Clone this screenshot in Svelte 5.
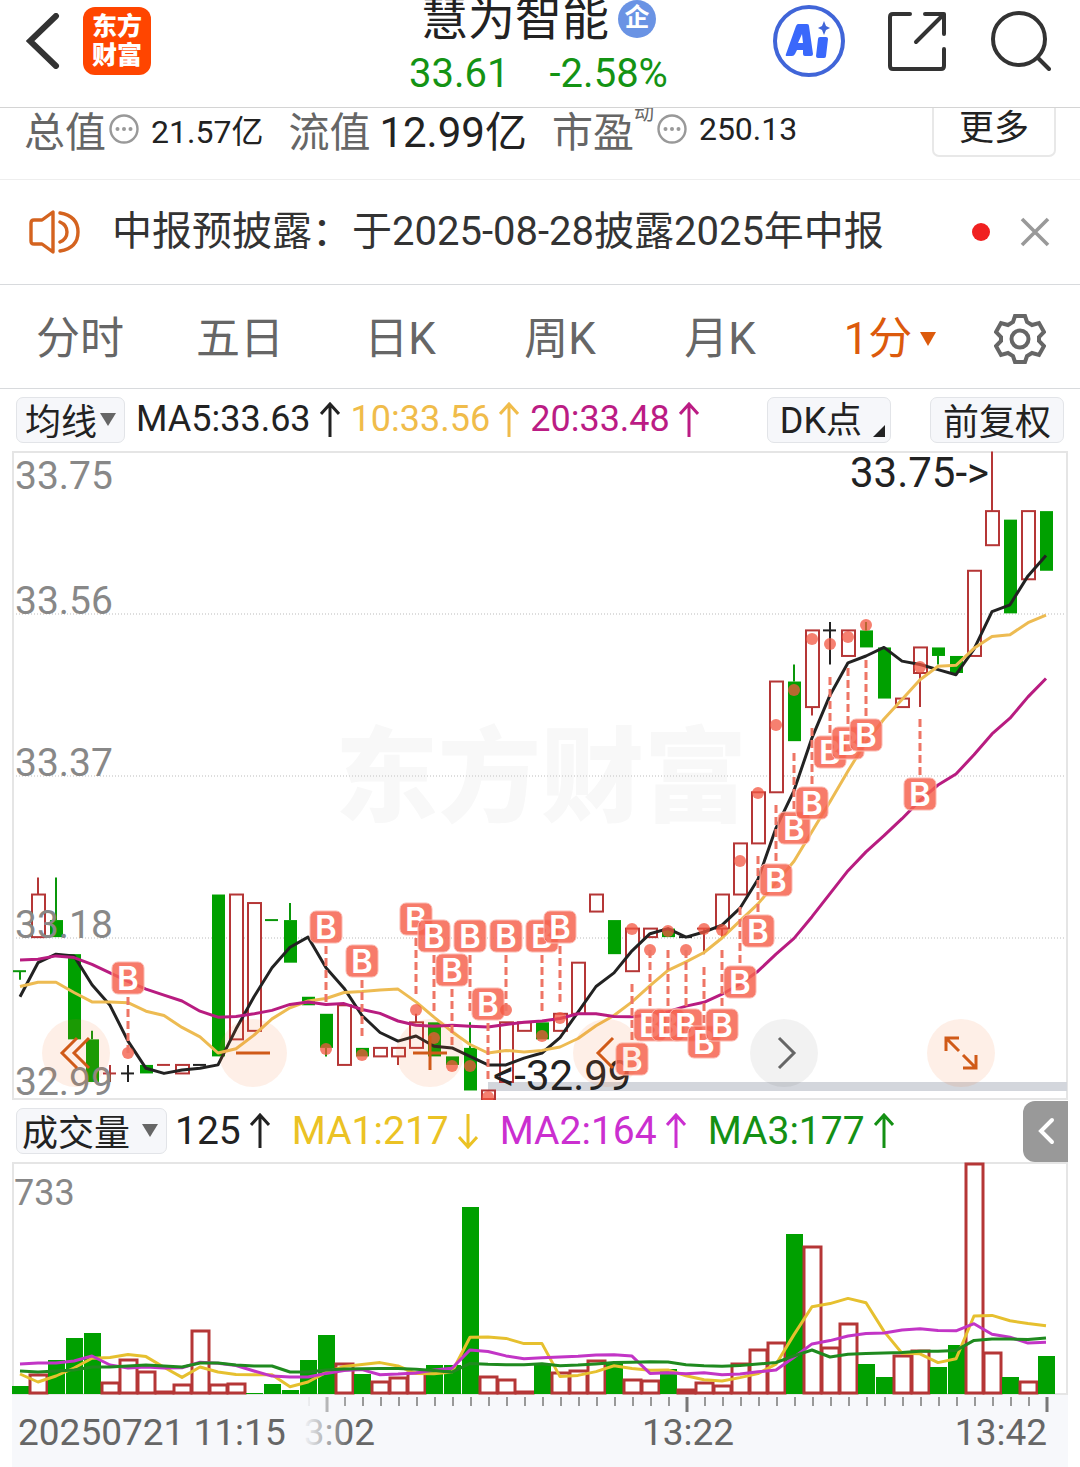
<script lang="ts">
  type Kind = 'up' | 'down' | 'flat';
  // kind, high, body top, body bottom, low (in ticks of 0.01 above 32.99), volume
  type Bar = [Kind, number, number, number, number, number];

  const STEP = 18;
  const TICK = 8.52;

  const bars: Bar[] = [
    ['down', 15, 15, 15, 14, 8],
    ['up', 26, 24, 19, 19, 20],
    ['down', 26, 21, 19, 19, 34],
    ['down', 17, 17, 7, 7, 56],
    ['down', 8, 7, 2, 2, 61],
    ['up', 4, 3, 3, 2, 12],
    ['flat', 4, 3, 3, 2, 35],
    ['down', 4, 4, 3, 3, 23],
    ['up', 4, 4, 4, 4, 3],
    ['up', 4, 4, 3, 3, 10],
    ['flat', 4, 4, 4, 4, 64],
    ['down', 24, 24, 5, 5, 10],
    ['up', 24, 24, 7, 7, 11],
    ['up', 23, 23, 8, 8, 1],
    ['down', 21, 21, 21, 21, 10],
    ['down', 23, 21, 16, 16, 4],
    ['down', 12, 12, 11, 11, 34],
    ['down', 10, 10, 6, 5, 59],
    ['up', 11, 11, 4, 4, 31],
    ['down', 6, 6, 5, 5, 20],
    ['up', 6, 6, 5, 5, 13],
    ['up', 6, 6, 5, 4, 17],
    ['up', 10, 9, 6, 6, 22],
    ['down', 9, 9, 5, 5, 29],
    ['down', 5, 5, 4, 4, 29],
    ['down', 9, 6, 1, 1, 187],
    ['up', 1, 1, 0, 0, 18],
    ['up', 9, 9, 2, 2, 15],
    ['up', 9, 9, 8, 8, 3],
    ['down', 9, 9, 7, 7, 29],
    ['up', 10, 10, 8, 8, 22],
    ['up', 16, 16, 10, 10, 24],
    ['up', 24, 24, 22, 22, 34],
    ['down', 21, 21, 17, 17, 32],
    ['up', 20, 20, 15, 15, 15],
    ['up', 20, 20, 19, 19, 14],
    ['down', 20, 20, 19, 19, 25],
    ['flat', 19, 19, 19, 19, 5],
    ['up', 20, 20, 20, 17, 12],
    ['up', 24, 24, 20, 19, 9],
    ['up', 30, 30, 24, 24, 31],
    ['up', 36, 36, 30, 30, 45],
    ['up', 49, 49, 36, 36, 52],
    ['down', 51, 49, 42, 42, 160],
    ['up', 55, 55, 46, 45, 148],
    ['flat', 56, 55, 55, 51, 47],
    ['up', 55, 55, 52, 52, 71],
    ['down', 56, 55, 53, 53, 30],
    ['down', 53, 53, 47, 47, 17],
    ['up', 47, 47, 46, 46, 39],
    ['up', 53, 53, 50, 46, 44],
    ['down', 53, 53, 52, 51, 27],
    ['down', 52, 52, 50, 50, 49],
    ['up', 62, 62, 52, 52, 231],
    ['up', 76, 69, 65, 65, 42],
    ['down', 68, 68, 57, 57, 17],
    ['up', 69, 69, 61, 61, 13],
    ['down', 69, 69, 62, 62, 38]
  ];

  // volume bars of a flat minute follow the previous close
  const volumeDown = new Set([0, 2, 3, 4, 13, 14, 15, 16, 17, 19, 23, 24, 25, 29, 33, 36, 43, 47, 48, 51, 52, 55, 57]);

  // bar index, badge centre, dot centre
  const signals = [
    [6, 527, 602], [17, 476, 598], [19, 510, 604], [22, 468, 559], [23, 485, 587],
    [24, 519, 615], [25, 485, 615], [26, 553, 646], [27, 485, 559], [29, 485, 585],
    [30, 476, 567], [34, 608, 478], [35, 574, 499], [36, 574, 480], [37, 574, 499],
    [38, 591, 478], [39, 574, 479], [40, 531, 410], [41, 480, 342], [42, 429, 274],
    [43, 377, 239], [44, 352, 188], [45, 301, 193], [46, 292, 186], [47, 284, 174],
    [50, 343, 216]
  ];

  const priceLabels = [
    { text: '33.75', y: 38 },
    { text: '33.56', y: 163 },
    { text: '33.37', y: 325 },
    { text: '33.18', y: 487 },
    { text: '32.99', y: 644 }
  ];

  const x = (i: number) => 8 + i * STEP;
  const y = (ticks: number) => 648 - ticks * TICK;

  // the leading values come from bars before the visible window
  function average(values: number[], size: number, lead: number[]) {
    return values.map((_, i) => {
      if (i < size - 1) return lead[i];
      return values.slice(i - size + 1, i + 1).reduce((a, b) => a + b, 0) / size;
    });
  }

  function points(values: number[], scale: (v: number) => number) {
    return values.map((v, i) => `${x(i)},${scale(v).toFixed(1)}`).join(' ');
  }

  const closes = bars.map(([kind, , top, bottom]) => (kind === 'down' ? bottom : top));
  const volumes = bars.map((b) => b[5]);

  const priceLines = [
    { name: 'ma5', pts: average(closes, 5, [12, 16, 17, 16.8]) },
    { name: 'ma10', pts: average(closes, 10, [13.2, 13.7, 13.7, 12.5, 11.4, 11.4, 11.3, 10.3, 9.8]) },
    {
      name: 'ma20',
      pts: average(closes, 20, [
        16.3, 16.4, 16.8, 16.6, 15.8, 14.8, 13.8, 12.9, 12.2, 11.5, 10.3, 9.6, 9.7, 10, 10.4, 11.1, 11.4, 11.1, 11.2
      ])
    }
  ];

  const volumeLines = [
    { name: 'vol5', pts: average(volumes, 5, [20, 12, 18, 26]) },
    { name: 'vol10', pts: average(volumes, 10, [30, 31, 31, 33, 38, 29, 26, 27, 26]) },
    {
      name: 'vol20',
      pts: average(volumes, 20, [23, 22, 23, 24, 27, 27, 28, 29, 28, 27, 31, 31, 29, 28, 28, 22, 22, 24, 25])
    }
  ];

  const periods = ['分时', '五日', '日K', '周K', '月K'];
  const timeTicks = Array.from({ length: 42 }, (_, n) => n + 16);

  let period = $state('1分');
  let noticeOpen = $state(true);
</script>

{#snippet arrow(down: boolean)}
  <svg class="arrow" class:down viewBox="0 0 20 36" aria-hidden="true">
    <path d="M10 35V2M1 12l9-10 9 10" />
  </svg>
{/snippet}

{#snippet more()}
  <svg class="more-info" viewBox="0 0 30 30" aria-hidden="true">
    <circle cx="15" cy="15" r="13.5" fill="none" stroke="#999" stroke-width="2.4" />
    <circle cx="8.5" cy="15" r="2" fill="#999" />
    <circle cx="15" cy="15" r="2" fill="#999" />
    <circle cx="21.5" cy="15" r="2" fill="#999" />
  </svg>
{/snippet}

<div class="page">
  <header class="topbar">
    <div class="side">
      <button type="button" class="icon-btn" aria-label="返回">
        <svg width="34" height="56" viewBox="0 0 34 56"><path d="M30 3 4 28l26 25" fill="none" stroke="#333" stroke-width="6" stroke-linecap="round" stroke-linejoin="miter" /></svg>
      </button>
      <div class="brand"><span>东方</span><span>财富</span></div>
    </div>

    <div class="stock">
      <h1>慧为智能<span class="badge">企</span></h1>
      <div class="quote"><span>33.61</span><span>-2.58%</span></div>
    </div>

    <div class="side end">
      <button type="button" class="icon-btn" aria-label="AI">
        <svg width="72" height="72" viewBox="0 0 72 72">
          <circle cx="36" cy="36" r="34" fill="#fff" stroke="#4065d8" stroke-width="4" />
          <path fill="#3a68fb" fill-rule="evenodd" d="M25 19h9q2 0 2 2l4 28q0 2-2 2h-6q-2 0-2-2v-4h-6l-2 4q-1 2-3 2h-5q-2 0-1-2l10-28q1-2 2-2zM29 29l-4 9h5zM47 32h6q2 0 2 2l-2 17q0 2-2 2h-6q-2 0-2-2l2-17q0-2 2-2z" />
          <path fill="#4065d8" d="m51 16 2 5 4 2-4 2-2 5-2-5-4-2 4-2z" />
        </svg>
      </button>
      <button type="button" class="icon-btn" aria-label="分享">
        <svg width="60" height="60" viewBox="0 0 60 60" fill="none" stroke="#333" stroke-width="4" stroke-linecap="round" stroke-linejoin="round">
          <path d="M22 3H5q-3 0-3 3v49q0 3 3 3h48q3 0 3-3V38M37 3h19v20M55 4 28 31" />
        </svg>
      </button>
      <button type="button" class="icon-btn" aria-label="搜索">
        <svg width="60" height="60" viewBox="0 0 60 60" fill="none" stroke="#333" stroke-width="4" stroke-linecap="round">
          <circle cx="28" cy="28" r="26" />
          <path d="m47 47 11 11" />
        </svg>
      </button>
    </div>
  </header>

  <section class="metrics">
    <div class="metrics-row">
      <div class="metric"><span class="label">总值</span>{@render more()}<span class="value small">21.57亿</span></div>
      <div class="metric"><span class="label">流值</span><span class="value">12.99亿</span></div>
      <div class="metric"><span class="label">市盈</span><sup>动</sup>{@render more()}<span class="value small">250.13</span></div>
      <button type="button" class="all">更多</button>
    </div>
  </section>

  {#if noticeOpen}
    <section class="notice">
      <svg width="52" height="44" viewBox="0 0 52 44" fill="none" stroke="#d4631f" stroke-width="3.4" stroke-linejoin="round" stroke-linecap="round" aria-hidden="true">
        <path d="M24 2v40L13 34H5q-3 0-3-3V13q0-3 3-3h8zM31 12q7 3 7 10t-7 10M31 3q18 3 18 19T31 41" />
      </svg>
      <p>中报预披露：于2025-08-28披露2025年中报</p>
      <i class="dot"></i>
      <button type="button" class="icon-btn" aria-label="关闭" onclick={() => (noticeOpen = false)}>
        <svg width="30" height="30" viewBox="0 0 30 30"><path d="m2 2 26 26M28 2 2 28" stroke="#999" stroke-width="3.6" /></svg>
      </button>
    </section>
  {/if}

  <nav class="tabs">
    {#each periods as name}
      <button type="button" class:active={period === name} onclick={() => (period = name)}>{name}</button>
    {/each}
    <button type="button" class="minute" class:active={period === '1分'} onclick={() => (period = '1分')}>
      1分<svg width="16" height="14" viewBox="0 0 16 14" aria-hidden="true"><path d="M0 0h16L8 14z" fill="currentColor" /></svg>
    </button>
    <button type="button" aria-label="设置">
      <svg width="52" height="52" viewBox="0 0 52 52" fill="none" stroke="#666" stroke-width="4" stroke-linejoin="miter">
        <path d="M21 3h10l2 6 5 3 7-2 5 9-5 5v4l5 5-5 9-7-2-5 3-2 6H21l-2-6-5-3-7 2-5-9 5-5v-4l-5-5 5-9 7 2 5-3z" />
        <circle cx="26" cy="26" r="8.5" />
      </svg>
    </button>
  </nav>

  <div class="legend">
    <label class="picker">
      <select aria-label="主图指标"><option>均线</option></select>
      <svg width="16" height="14" viewBox="0 0 16 14" aria-hidden="true"><path d="M0 0h16L8 13z" fill="#666" /></svg>
    </label>
    <span class="item">MA5:33.63{@render arrow(false)}</span>
    <span class="item amber">10:33.56{@render arrow(false)}</span>
    <span class="item plum">20:33.48{@render arrow(false)}</span>
    <div class="actions">
      <button type="button" class="chip dk">DK点<svg width="12" height="12" viewBox="0 0 12 12" aria-hidden="true"><path d="M12 0v12H0z" fill="#222" /></svg></button>
      <button type="button" class="chip">前复权</button>
    </div>
  </div>

  <div class="chart">
    <svg viewBox="0 0 1056 649" role="img" aria-label="1分钟K线">
      <text class="watermark" x="529" y="363">东方财富</text>
      {#each [163, 325, 487] as gy}
        <line class="grid" x1="1" x2="1055" y1={gy} y2={gy} />
      {/each}
      <rect class="frame" x="1" y="1" width="1054" height="647" />
      <rect x="476" y="631" width="579" height="9" fill="#d3d6dc" />

      {#each bars as [kind, high, top, bottom, low], i}
        <g class={kind}>
          {#if top === bottom}
            <line class="wick" x1={x(i) - 7} x2={x(i) + 6} y1={y(top)} y2={y(top)} />
            <line class="wick" x1={x(i)} x2={x(i)} y1={y(high)} y2={y(low)} />
          {:else}
            <line class="wick" x1={x(i)} x2={x(i)} y1={y(high)} y2={y(top)} />
            <line class="wick" x1={x(i)} x2={x(i)} y1={y(bottom)} y2={y(low)} />
            <rect class="body" x={x(i) - 6} y={y(top)} width="13" height={(top - bottom) * TICK} />
          {/if}
        </g>
      {/each}

      {#each priceLines as line}
        <polyline class="line {line.name}" points={points(line.pts, y)} />
      {/each}

      {#each priceLabels as label}
        <text class="axis" x="3" y={label.y}>{label.text}</text>
      {/each}
      <text class="peak" x="977" y="36" text-anchor="end">33.75-&gt;</text>
      <text class="peak" x="481" y="639">&lt;-32.99</text>

      {#each signals as [i, badge, dot]}
        {@const start = badge > dot ? badge - 75 : badge + 19}
        <circle class="signal-dot" cx={x(i)} cy={dot} r="6" />
        <line class="signal-line" x1={x(i)} x2={x(i)} y1={start} y2={start + 56} />
        <rect class="signal" x={x(i) - 16} y={badge - 16} width="32" height="32" rx="6" />
        <text class="signal-text" x={x(i)} y={badge + 12}>B</text>
      {/each}
    </svg>

    <div class="controls">
      <button type="button" aria-label="快退">
        <svg viewBox="0 0 36 36"><path d="M19 3 4 18l15 15M31 3 16 18l15 15" /></svg>
      </button>
      <button type="button" aria-label="缩小">
        <svg viewBox="0 0 36 36"><path d="M1 18h34" /></svg>
      </button>
      <button type="button" aria-label="放大">
        <svg viewBox="0 0 36 36"><path d="M1 18h34M18 1v34" /></svg>
      </button>
      <button type="button" aria-label="左移">
        <svg viewBox="0 0 36 36"><path d="M24 3 9 18l15 15" /></svg>
      </button>
      <button type="button" class="muted" aria-label="右移">
        <svg viewBox="0 0 36 36"><path d="m13 3 15 15-15 15" /></svg>
      </button>
      <button type="button" aria-label="全屏">
        <svg viewBox="0 0 36 36"><path d="M3 16V3h13M3 3l13 13M20 33h13V20M33 33 20 20" /></svg>
      </button>
    </div>
  </div>

  <div class="legend volume-legend">
    <label class="picker wide">
      <select aria-label="副图指标"><option>成交量</option></select>
      <svg width="16" height="14" viewBox="0 0 16 14" aria-hidden="true"><path d="M0 0h16L8 13z" fill="#666" /></svg>
    </label>
    <span class="item">125{@render arrow(false)}</span>
    <span class="item gold">MA1:217{@render arrow(true)}</span>
    <span class="item violet">MA2:164{@render arrow(false)}</span>
    <span class="item green">MA3:177{@render arrow(false)}</span>
    <button type="button" class="drawer" aria-label="展开">
      <svg width="18" height="28" viewBox="0 0 18 28"><path d="M15 3 4 14l11 11" fill="none" stroke="#fff" stroke-width="4" stroke-linecap="round" /></svg>
    </button>
  </div>

  <div class="chart">
    <svg viewBox="0 0 1056 233" role="img" aria-label="成交量">
      <rect class="frame" x="1" y="1" width="1054" height="231" />
      {#each volumes as v, i}
        {#if volumeDown.has(i)}
          <rect class="vol-down" x={x(i) - 8} y={232 - v} width="17" height={v} />
        {:else}
          <rect class="vol-up" x={x(i) - 8} y={233 - v} width="17" height={Math.max(v - 2, 1)} />
        {/if}
      {/each}
      {#each volumeLines as line}
        <polyline class="line {line.name}" points={points(line.pts, (v) => 232 - v)} />
      {/each}
      <text class="axis small" x="2" y="43">733</text>
    </svg>
  </div>

  <div class="chart timeline">
    <svg viewBox="0 0 1056 72" role="img" aria-label="时间轴">
      <defs>
        <linearGradient id="fade">
          <stop offset="0.86" stop-color="#f7f8fb" />
          <stop offset="1" stop-color="#f7f8fb" stop-opacity="0" />
        </linearGradient>
      </defs>
      {#each timeTicks as i}
        {@const major = i % 20 === 17}
        <line class="tick" class:major x1={x(i) + 1} x2={x(i) + 1} y1="2" y2={major ? 17 : 11} />
      {/each}
      <text class="time" x="317" y="50" text-anchor="middle">13:02</text>
      <text class="time" x="676" y="50" text-anchor="middle">13:22</text>
      <text class="time" x="1035" y="50" text-anchor="end">13:42</text>
      <rect width="338" height="72" fill="url(#fade)" />
      <text class="time" x="6" y="50">20250721 11:15</text>
    </svg>
  </div>
</div>

<style>
  :global(body) {
    background: #fff;
  }

  .page {
    font-family: Roboto, 'Noto Sans CJK SC', sans-serif;
    line-height: 1.2;
    color: #222;
  }

  button,
  select {
    margin: 0;
    padding: 0;
    border: none;
    background: none;
    color: inherit;
    font: inherit;
    cursor: pointer;
  }

  svg {
    display: block;
    flex-shrink: 0;
  }

  .icon-btn {
    display: flex;
  }

  /* header */
  .topbar {
    display: grid;
    grid-template-columns: 1fr auto 1fr;
    height: 108px;
    padding: 0 29px 0 26px;
    box-sizing: border-box;
    border-bottom: 1px solid #d4d4d4;
    overflow: hidden;
  }

  .side {
    display: flex;
    align-items: center;
    gap: 23px;
    height: 81px;
  }

  .side.end {
    justify-content: flex-end;
    gap: 43px;
  }

  .brand {
    display: flex;
    flex-direction: column;
    justify-content: center;
    align-items: center;
    width: 68px;
    height: 68px;
    border-radius: 12px;
    background: #ff4500;
    color: #fff;
    font-size: 25px;
    font-weight: 900;
    line-height: 29px;
  }

  .stock {
    display: flex;
    flex-direction: column;
    align-items: center;
  }

  h1 {
    display: flex;
    align-items: center;
    gap: 9px;
    margin: 0;
    font-size: 47px;
    font-weight: 400;
    line-height: 36px;
  }

  .badge {
    width: 38px;
    height: 38px;
    border-radius: 50%;
    background: #6a93e4;
    color: #fff;
    font-size: 25px;
    font-weight: 700;
    line-height: 36px;
    text-align: center;
  }

  .quote {
    display: flex;
    gap: 40px;
    margin-top: 12px;
    color: #149314;
    font-size: 40px;
    line-height: 48px;
  }

  /* key figures */
  .metrics {
    height: 71px;
    border-bottom: 1px solid #eee;
    overflow: hidden;
  }

  .metrics-row {
    display: flex;
    align-items: center;
    gap: 25px;
    height: 57px;
    margin-top: -8px;
    padding: 0 24px;
  }

  .metric {
    display: flex;
    align-items: center;
    line-height: normal;
    white-space: nowrap;
  }

  .label {
    color: #666;
    font-size: 41px;
  }

  .value {
    margin-left: 9px;
    font-size: 42px;
  }

  .value.small {
    margin-left: 12px;
    font-size: 32px;
  }

  .more-info {
    width: 30px;
    height: 30px;
    margin-left: 3px;
  }

  sup {
    align-self: flex-start;
    color: #666;
    font-size: 20px;
    line-height: 28px;
  }

  .all {
    width: 124px;
    height: 57px;
    margin-left: auto;
    box-sizing: border-box;
    border: 2px solid #e8e8e8;
    border-radius: 7px;
    font-size: 35px;
  }

  /* announcement */
  .notice {
    display: flex;
    align-items: center;
    height: 104px;
    padding: 0 30px 0 29px;
    border-bottom: 1px solid #d8dadd;
  }

  .notice p {
    flex: 1;
    margin: 0 0 0 31px;
    color: #333;
    font-size: 40px;
    white-space: nowrap;
  }

  .dot {
    width: 18px;
    height: 18px;
    margin-right: 30px;
    border-radius: 50%;
    background: #f02020;
  }

  /* period tabs */
  .tabs {
    display: grid;
    grid-template-columns: repeat(6, 4fr) 3fr;
    height: 103px;
    border-bottom: 1px solid #d8dadd;
    color: #666;
    font-size: 44px;
    line-height: 58px;
  }

  .tabs button {
    display: flex;
    align-items: center;
    justify-content: center;
    padding-top: 4px;
  }

  .tabs .active {
    color: #dc5a0c;
  }

  .tabs .minute {
    gap: 8px;
    padding-left: 20px;
  }

  /* indicator rows */
  .legend {
    display: flex;
    align-items: center;
    gap: 11px;
    height: 62px;
    padding: 0 16px;
    font-size: 36px;
    white-space: nowrap;
  }

  .picker {
    display: grid;
    align-items: center;
    width: 109px;
    height: 46px;
    box-sizing: border-box;
    border: 1px solid #e2e4e8;
    border-radius: 7px;
    background: #f6f7fa;
  }

  .picker.wide {
    width: 151px;
  }

  .picker select,
  .picker svg {
    grid-area: 1 / 1;
  }

  .picker select {
    height: 44px;
    padding: 4px 0 0 8px;
    appearance: none;
  }

  .picker.wide select {
    padding-left: 5px;
  }

  .picker svg {
    justify-self: end;
    margin-right: 8px;
    pointer-events: none;
  }

  .item {
    display: flex;
    align-items: center;
    gap: 9px;
  }

  .arrow {
    width: 20px;
    height: 36px;
    fill: none;
    stroke: currentColor;
    stroke-width: 3;
  }

  .arrow.down {
    transform: rotate(180deg);
  }

  .amber { color: #f0bc4a; }
  .plum { color: #bb1c84; }
  .gold { color: #ebc224; }
  .violet { color: #cb2fd0; }
  .green { color: #149014; }

  .actions {
    display: flex;
    gap: 39px;
    margin-left: auto;
  }

  .chip {
    height: 46px;
    padding: 4px 12px 0;
    border: 1px solid #e2e4e8;
    border-radius: 7px;
    background: #f6f7fa;
  }

  .chip.dk {
    display: flex;
    align-items: center;
    gap: 11px;
    padding-right: 5px;
  }

  .chip.dk svg {
    align-self: flex-end;
    margin-bottom: 5px;
  }

  .volume-legend {
    gap: 22px;
    padding-right: 12px;
    font-size: 39px;
  }

  .volume-legend .picker {
    margin-right: -14px;
    font-size: 36px;
  }

  .drawer {
    display: flex;
    align-items: center;
    justify-content: center;
    width: 45px;
    height: 61px;
    margin-left: auto;
    border-radius: 12px 0 0 12px;
    background: #999;
  }

  /* charts */
  .chart {
    position: relative;
    margin: 0 12px;
  }

  .chart > svg {
    width: 100%;
  }

  .timeline {
    background: #f7f8fb;
  }

  .frame {
    fill: none;
    stroke: #e5e5e5;
    stroke-width: 2;
  }

  .grid {
    stroke: #ddd;
    stroke-width: 2;
    stroke-dasharray: 1 2;
  }

  .watermark {
    fill: #f8f8f8;
    font-size: 103px;
    font-weight: 900;
    text-anchor: middle;
  }

  .wick {
    stroke-width: 2;
  }

  .up .wick { stroke: #b53636; }
  .down .wick { stroke: #0a960a; }
  .flat .wick { stroke: #222; }

  .up .body {
    fill: #fff;
    stroke: #b53636;
    stroke-width: 2;
  }

  .down .body,
  .vol-down {
    fill: #00a000;
  }

  .vol-up {
    fill: #fff;
    stroke: #b53636;
    stroke-width: 3;
  }

  .line {
    fill: none;
    stroke-width: 3;
    stroke-linejoin: round;
  }

  .ma5 { stroke: #222; }
  .ma10 { stroke: #edbb52; }
  .ma20 { stroke: #b81c80; }
  .vol5 { stroke: #e6c02f; }
  .vol10 { stroke: #c235c6; }
  .vol20 { stroke: #1f8a1f; }

  .axis {
    fill: #888;
    font-size: 39px;
  }

  .axis.small {
    font-size: 36px;
  }

  .peak {
    fill: #222;
    font-size: 42px;
  }

  .signal-dot {
    fill: #f35540;
    fill-opacity: 0.75;
  }

  .signal-line {
    stroke: #ee7565;
    stroke-width: 3;
    stroke-dasharray: 8 4;
  }

  .signal {
    fill: #f66450;
    fill-opacity: 0.85;
    stroke: #fbb9b0;
    stroke-width: 1;
  }

  .signal-text {
    fill: #fff;
    font-family: Inter, sans-serif;
    font-size: 33px;
    font-weight: 600;
    text-anchor: middle;
  }

  .controls {
    position: absolute;
    right: 73px;
    bottom: 13px;
    left: 30px;
    display: flex;
    justify-content: space-between;
  }

  .controls button {
    display: flex;
    align-items: center;
    justify-content: center;
    width: 68px;
    height: 68px;
    border-radius: 50%;
    background: rgba(246, 110, 40, 0.11);
    color: #d05a18;
  }

  .controls .muted {
    background: rgba(0, 0, 0, 0.05);
    color: #666;
  }

  .controls svg {
    width: 36px;
    height: 36px;
    fill: none;
    stroke: currentColor;
    stroke-width: 3;
  }

  .tick {
    stroke: #999;
    stroke-width: 2;
  }

  .tick.major {
    stroke: #777;
    stroke-width: 3;
  }

  .time {
    fill: #666;
    font-size: 37px;
  }
</style>
